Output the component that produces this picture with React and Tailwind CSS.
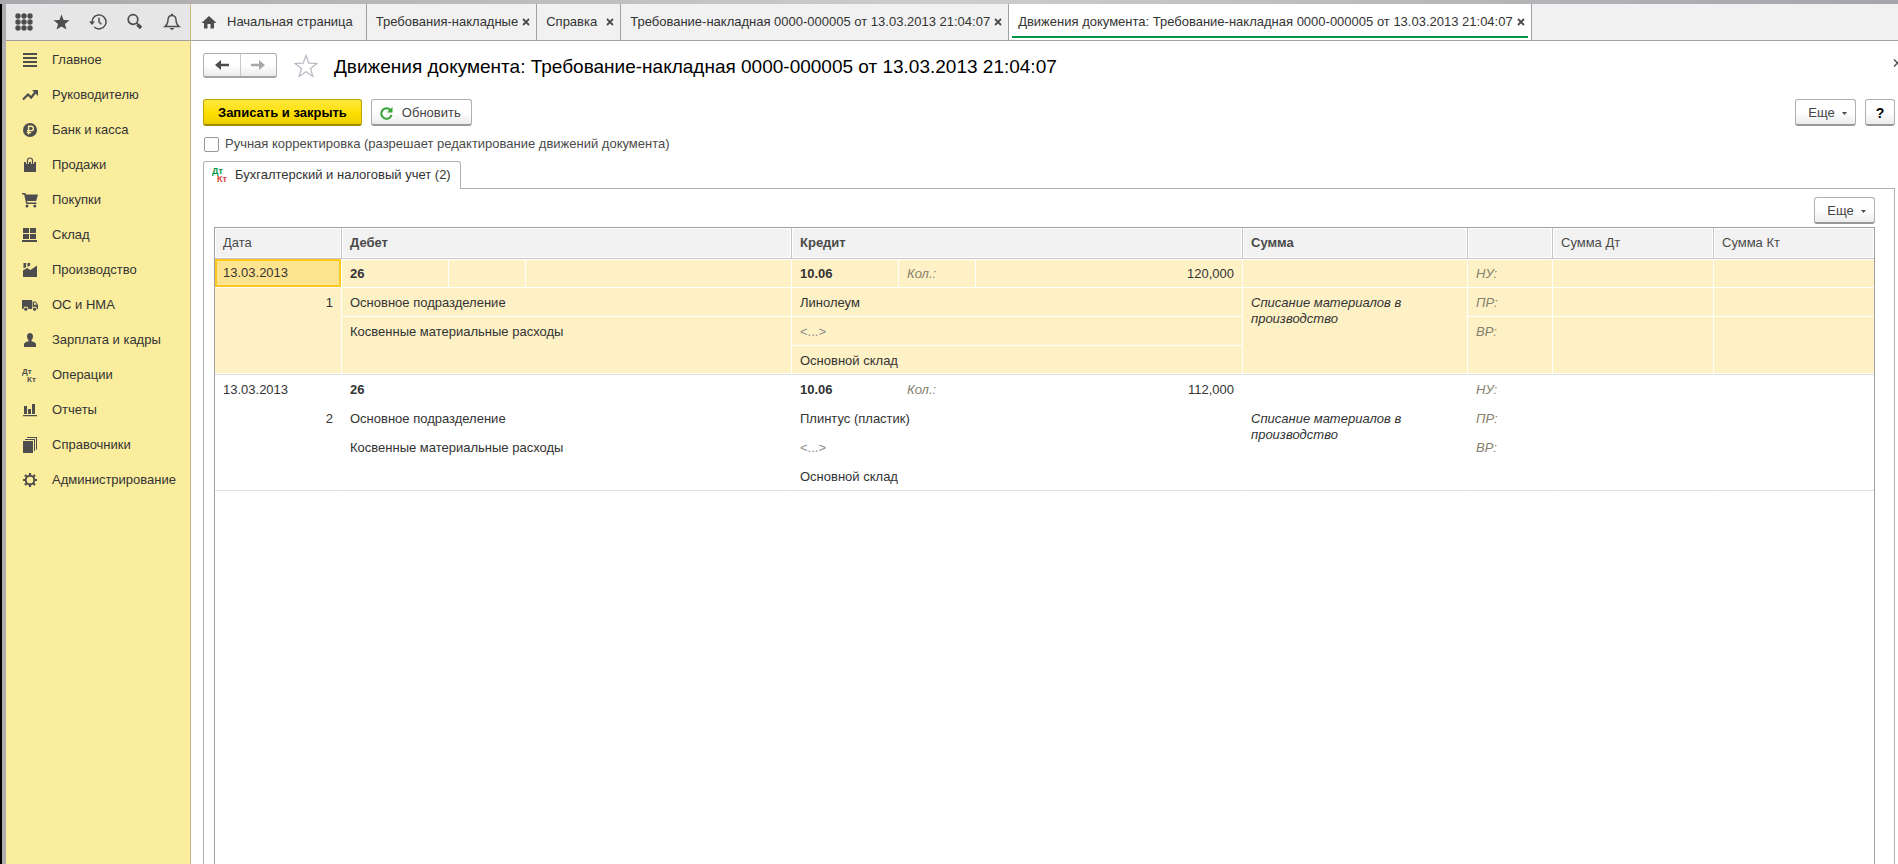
import React from "react";

const FONT = "font-['Liberation_Sans',Arial,sans-serif]";

function Svg({ size = 16, children, className = "" }) {
  return (
    <svg width={size} height={size} viewBox={`0 0 ${size} ${size}`} fill="#4d4d4d" className={`shrink-0 ${className}`} aria-hidden="true">
      {children}
    </svg>
  );
}

function PostingsGlyph({ top, bottom, size = 8 }) {
  return (
    <>
      <text x="0" y="7" fontSize={size} fontWeight="bold" fill={top} fontFamily="Liberation Sans, Arial, sans-serif">Дт</text>
      <text x="5" y="15" fontSize={size} fontWeight="bold" fill={bottom} fontFamily="Liberation Sans, Arial, sans-serif">Кт</text>
    </>
  );
}

const ICONS = {
  main: <path d="M1 1h14v2H1zM1 5h14v2H1zM1 9h14v2H1zM1 13h14v2H1z" />,
  trend: (
    <>
      <path d="M1 12.5 6 7.5l3.2 3L13.5 5" fill="none" stroke="#4d4d4d" strokeWidth="2.2" />
      <path d="M10 3h6v6z" />
    </>
  ),
  bank: (
    <>
      <circle cx="8" cy="8" r="7" />
      <path d="M6.600 12.500V4.200h2.600a2.100 2.100 0 0 1 0 4.400H4.800M4.800 10.600h4.400" fill="none" stroke="#fbed9e" strokeWidth="1.400" />
    </>
  ),
  bag: (
    <>
      <path d="M2 5h12v10H2z" />
      <path d="M5.500 7V3.500a2.500 2.500 0 0 1 5 0V7" fill="none" stroke="#fbed9e" strokeWidth="3" />
      <path d="M5.500 7.500V3.500a2.500 2.500 0 0 1 5 0v4" fill="none" stroke="#4d4d4d" strokeWidth="1.200" />
    </>
  ),
  cart: (
    <>
      <path d="M0 1h3.400l.5 1.500H16L14.200 9H5l.4 1.600h9v1.400H4.200L2.200 2.400H0z" />
      <circle cx="5" cy="14" r="1.500" />
      <circle cx="12.800" cy="14" r="1.500" />
    </>
  ),
  store: <path d="M1 1h6v5H1zM8 1h6v5H8zM1 7h6v5H1zM8 7h6v5H8zM0 13h15v2H0z" />,
  factory: <path d="M1 15V8.500L5 6 8.500 8 15 3.500V15zM1.500 1h2.600v4L1.500 6.500zM5.500 1h2.600v2.500L5.500 5z" />,
  truck: (
    <>
      <path d="M0 3h10v9H0zM10.600 4.500h3.200L16 8v4h-5.400z" />
      <path d="M12 5.600h1.300l1.400 2.200H12z" fill="#fbed9e" />
      <circle cx="3.800" cy="12" r="2.400" fill="#fbed9e" />
      <circle cx="12.600" cy="12" r="2.400" fill="#fbed9e" />
      <circle cx="3.800" cy="12.200" r="1.600" />
      <circle cx="12.600" cy="12.200" r="1.600" />
    </>
  ),
  person: <path d="M8 1c1.900 0 3 1.400 3 3.300C11 6 10.300 7.300 9.500 8v1.200c2.600.500 4.500 1.500 4.500 3.300V15H2v-2.500c0-1.800 1.900-2.800 4.500-3.300V8C5.700 7.300 5 6 5 4.300 5 2.400 6.100 1 8 1z" />,
  ops: <PostingsGlyph top="#4d4d4d" bottom="#4d4d4d" />,
  chart: <path d="M2 4h3v8H2zM6 7h3v5H6zM10 2h3v10h-3zM1 13h14v1.300H1z" />,
  books: <path d="M1 4h10v12H1zM3 2h10v12h-1V3H3zM5 0h10v12.500h-1V1H5z" />,
  gear: (
    <>
      <circle cx="8" cy="8" r="4.300" fill="none" stroke="#4d4d4d" strokeWidth="1.900" />
      <path
        d="M8 1v2.500M8 12.500V15M1 8h2.500M12.500 8H15M3 3l1.800 1.800M11.200 11.200 13 13M13 3l-1.800 1.800M4.800 11.200 3 13"
        stroke="#4d4d4d"
        strokeWidth="2.200"
      />
    </>
  ),
};

const SECTIONS = [
  ["main", "Главное"],
  ["trend", "Руководителю"],
  ["bank", "Банк и касса"],
  ["bag", "Продажи"],
  ["cart", "Покупки"],
  ["store", "Склад"],
  ["factory", "Производство"],
  ["truck", "ОС и НМА"],
  ["person", "Зарплата и кадры"],
  ["ops", "Операции"],
  ["chart", "Отчеты"],
  ["books", "Справочники"],
  ["gear", "Администрирование"],
];

const TOOLS = [
  [
    "Все функции",
    <g key="g">
      {[3, 9, 15].map((y) => [3, 9, 15].map((x) => <circle key={`${x}-${y}`} cx={x} cy={y} r="2.700" />))}
    </g>,
  ],
  ["Избранное", <path key="s" d="m9.500 1.500 2.100 5.400 5.900.3-4.600 3.700 1.600 5.700-5-3.200-5 3.200 1.600-5.700-4.600-3.700 5.900-.3z" />],
  [
    "История",
    <g key="h" fill="none" stroke="#4d4d4d" strokeWidth="1.500">
      <path d="M3 9a7 7 0 1 1 2.200 5" />
      <path d="M10 4.800V9l2.400 2.200" />
      <path d="M0 8.500h6L3 12z" fill="#4d4d4d" stroke="none" />
    </g>,
  ],
  [
    "Поиск",
    <g key="f" fill="none" stroke="#4d4d4d">
      <circle cx="7" cy="6.500" r="4.800" strokeWidth="1.700" />
      <path d="m10.500 10 1.500 1.500" strokeWidth="1.500" />
      <path d="m11.500 11.500 3.500 3.500" strokeWidth="3.600" />
    </g>,
  ],
  [
    "Уведомления",
    <g key="b">
      <path d="M9 2.500C6.300 2.500 5 4.500 5 7c0 3.500-1 5-3 6.500h14C14 12 13 10.500 13 7c0-2.500-1.300-4.500-4-4.500z" fill="none" stroke="#4d4d4d" strokeWidth="1.400" />
      <path d="M8 .8h2V3H8zM6.500 15h5L9 17.200z" />
    </g>,
  ],
];

const TABS = [
  "Требования-накладные",
  "Справка",
  "Требование-накладная 0000-000005 от 13.03.2013 21:04:07",
  "Движения документа: Требование-накладная 0000-000005 от 13.03.2013 21:04:07",
];

const ENTRIES = [
  { id: 1, date: "13.03.2013", debit: "26", credit: "10.06", qty: "120,000", item: "Линолеум", selected: true },
  { id: 2, date: "13.03.2013", debit: "26", credit: "10.06", qty: "112,000", item: "Плинтус (пластик)", selected: false },
];

function Cross() {
  return (
    <svg width="8" height="8" viewBox="0 0 8 8" fill="none" stroke="#4d4d4d" strokeWidth="1.800" aria-hidden="true">
      <path d="m1 1 6 6M7 1 1 7" />
    </svg>
  );
}

function Tab({ title, active }) {
  return (
    <div className={`relative flex min-w-[84px] items-center justify-between gap-1 whitespace-nowrap border-r border-[#a0a0a0] pl-[9px] pr-[6px] ${active ? "bg-white" : ""}`}>
      <a href="#tab">{title}</a>
      <button type="button" aria-label="Закрыть"><Cross /></button>
      {active && <span className="absolute inset-x-[3px] bottom-[2px] h-[2px] bg-[#009646]" />}
    </div>
  );
}

const BUTTON =
  "flex h-[27px] items-center justify-center rounded-[3px] border border-[#b0b0b0] border-b-2 border-b-[#999999] bg-linear-to-b from-white from-50% to-[#ececec] pt-[2px] text-[#444444]";

function MoreButton() {
  return (
    <button type="button" className={`${BUTTON} w-[61px] gap-[7px] pl-1`}>
      Еще
      <svg width="5" height="3" viewBox="0 0 5 3" fill="#4d4d4d" aria-hidden="true"><path d="M0 0h5L2.500 3z" /></svg>
    </button>
  );
}

function Entry({ e }) {
  const bg = e.selected ? "bg-[#fef1c6]" : "bg-white";
  const base = `border-b border-r border-white px-2 pb-0 align-top ${bg}`;
  const cell = `${base} pt-[2px] leading-[26px]`;
  const first = `${base} h-[29px] border-t pt-0 leading-[27px]`;
  const last = `${cell} border-b-[#e0e0e0] shadow-[inset_0_-1px_0_white]`;
  const muted = "italic text-[#85806b]";
  return (
    <tbody>
      <tr>
        {e.selected ? (
          <td className="h-[29px] border-b border-r border-white bg-[#ffe48f] px-2 py-0 align-top leading-[28px] shadow-[inset_0_0_0_2px_#fcc81e]">{e.date}</td>
        ) : (
          <td className={first}>{e.date}</td>
        )}
        <td className={`${first} font-bold`}>{e.debit}</td>
        <td className={first} />
        <td className={first} />
        <td className={`${first} font-bold`}>{e.credit}</td>
        <td className={`${first} ${muted}`}>Кол.:</td>
        <td className={`${first} text-right`}>{e.qty}</td>
        <td className={first} />
        <td className={`${first} ${muted}`}>НУ:</td>
        <td className={first} />
        <td className={`${first} border-r-0`} />
      </tr>
      <tr>
        <td rowSpan={3} className={`${last} text-right`}>{e.id}</td>
        <td colSpan={3} className={`${cell} h-[29px]`}>Основное подразделение</td>
        <td colSpan={3} className={`${cell} h-[29px]`}>{e.item}</td>
        <td rowSpan={3} className={`${last} italic`}>
          <div className="pr-12 pt-[5px] leading-4">Списание материалов в производство</div>
        </td>
        <td className={`${cell} ${muted}`}>ПР:</td>
        <td className={cell} />
        <td className={`${cell} border-r-0`} />
      </tr>
      <tr>
        <td colSpan={3} rowSpan={2} className={last}>Косвенные материальные расходы</td>
        <td colSpan={3} className={`${cell} h-[29px] text-[#8c8c8c]`}>&lt;...&gt;</td>
        <td rowSpan={2} className={`${last} ${muted}`}>ВР:</td>
        <td rowSpan={2} className={last} />
        <td rowSpan={2} className={`${last} border-r-0`} />
      </tr>
      <tr>
        <td colSpan={3} className={`${last} h-[29px]`}>Основной склад</td>
      </tr>
    </tbody>
  );
}

function Postings() {
  const th =
    "h-[31px] border-b border-r border-b-[#c4c4c4] border-r-[#c4c4c4] bg-[#f2f2f2] px-2 py-0 text-left align-middle text-[#4a4a4a] shadow-[inset_0_0_0_1px_white]";
  return (
    <table className="w-full table-fixed border-separate border-spacing-0">
      <colgroup>
        <col className="w-[127px]" />
        <col className="w-[107px]" />
        <col className="w-[77px]" />
        <col className="w-[266px]" />
        <col className="w-[107px]" />
        <col className="w-[77px]" />
        <col className="w-[267px]" />
        <col className="w-[225px]" />
        <col className="w-[85px]" />
        <col className="w-[161px]" />
        <col className="w-[160px]" />
      </colgroup>
      <thead>
        <tr>
          <th className={`${th} font-normal`}>Дата</th>
          <th colSpan={3} className={th}>Дебет</th>
          <th colSpan={3} className={th}>Кредит</th>
          <th className={th}>Сумма</th>
          <th className={th} />
          <th className={`${th} font-normal`}>Сумма Дт</th>
          <th className={`${th} border-r-0 font-normal`}>Сумма Кт</th>
        </tr>
      </thead>
      {ENTRIES.map((e) => <Entry key={e.id} e={e} />)}
    </table>
  );
}

export default function App() {
  return (
    <div className={`flex min-h-screen flex-col bg-white text-[13px] leading-4 text-[#333333] ${FONT}`}>
      <div className="h-1 bg-linear-to-r from-[#a9a9ad] via-[#cdcdcd] to-[#a4a5aa]" />
      <div className="flex flex-1">
        <div className="w-[2px] shrink-0 bg-black" />
        <div className="w-1 shrink-0 bg-[#b0adb0]" />
        <aside className="flex w-[185px] shrink-0 flex-col border-r border-[#c9b879] bg-[#fbed9e]">
          <div className="flex h-[37px] border-b border-[#a0a0a0] bg-[#e6e6e6]">
            {TOOLS.map(([label, icon]) => (
              <button key={label} type="button" aria-label={label} className="flex flex-1 items-center justify-center">
                <Svg size={18}>{icon}</Svg>
              </button>
            ))}
          </div>
          <nav className="flex flex-col pt-[1px]">
            {SECTIONS.map(([icon, label]) => (
              <a key={label} href="#section" className="flex h-[35px] items-center gap-[14px] whitespace-nowrap pl-4">
                <Svg>{ICONS[icon]}</Svg>
                {label}
              </a>
            ))}
          </nav>
        </aside>

        <div className="flex min-w-0 flex-1 flex-col">
          <div className="flex h-[37px] shrink-0 border-b border-[#a0a0a0] bg-[#f1f1f1]">
            <a href="#home" className="flex items-center gap-[10px] whitespace-nowrap border-r border-[#a0a0a0] pl-[10px] pr-[13px]">
              <Svg><path d="M8 2 15.500 9H13v5.500H9.500V10h-3v4.500H3V9H.5z" /></Svg>
              Начальная страница
            </a>
            {TABS.map((t, i) => <Tab key={t} title={t} active={i === 3} />)}
          </div>

          <main className="flex flex-1 flex-col pl-3 pr-[3px]">
            <header className="flex items-start pt-3">
              <div className="flex h-[25px] w-[74px] rounded-[3px] border border-[#b0b0b0] border-b-2 border-b-[#a5a5a5] bg-linear-to-b from-white from-50% to-[#ececec]">
                <button type="button" aria-label="Назад" className="flex flex-1 items-center justify-center border-r border-[#c8c8c8]">
                  <Svg size={14}><path d="M0 7l6-5v3.700h8v2.600H6V12z" /></Svg>
                </button>
                <button type="button" aria-label="Вперед" className="flex flex-1 items-center justify-center">
                  <Svg size={14}><path d="M14 7 8 2v3.700H0v2.600h8V12z" fill="#a8a8a8" /></Svg>
                </button>
              </div>
              <button type="button" aria-label="В избранное" className="ml-[17px] mt-[1px]">
                <svg width="24" height="24" viewBox="0 0 24 24" fill="none" stroke="#b4b8c0" strokeWidth="1.200" aria-hidden="true">
                  <path d="m12 1.500 2.800 7.700 8.200.3-6.500 5 2.300 7.900L12 17.800l-6.800 4.600 2.300-7.900L1 9.500l8.200-.3z" />
                </svg>
              </button>
              <h1 className="ml-4 flex-1 whitespace-nowrap text-[19px] leading-[28px] text-black">
                Движения документа: Требование-накладная 0000-000005 от 13.03.2013 21:04:07
              </h1>
              <button type="button" aria-label="Закрыть форму" className="-mr-[7px] mt-[6px]">
                <svg width="9" height="8" viewBox="0 0 9 8" fill="none" stroke="#4d4d4d" strokeWidth="1.400" aria-hidden="true"><path d="m1 .5 7 7M8 .5l-7 7" /></svg>
              </button>
            </header>

            <div className="mt-[18px] flex">
              <button
                type="button"
                className="h-[27px] rounded-[3px] border border-b-2 border-[#bba500] border-b-[#a08c00] bg-linear-to-b from-[#ffe93a] via-[#ffe000] to-[#edcf00] px-[14px] pt-[2px] font-bold text-black"
              >
                Записать и закрыть
              </button>
              <button type="button" className={`${BUTTON} ml-[9px] gap-[9px] pl-2 pr-[10px]`}>
                <svg width="13" height="13" viewBox="0 0 13 13" aria-hidden="true">
                  <path d="M10.600 3.300A5.200 5.200 0 1 0 11.500 8" fill="none" stroke="#36a336" strokeWidth="2" />
                  <path d="M12.500 0v5.500H7z" fill="#36a336" />
                </svg>
                Обновить
              </button>
              <div className="ml-auto flex gap-[9px]">
                <MoreButton />
                <button type="button" className={`${BUTTON} w-[30px] text-[14px] font-bold text-black`}>?</button>
              </div>
            </div>

            <label className="mt-2 flex h-5 items-center gap-[6px] pl-[1px] text-[#4a4a4a]">
              <input type="checkbox" className="size-[15px] appearance-none rounded-[2px] border border-[#999999] bg-white" />
              Ручная корректировка (разрешает редактирование движений документа)
            </label>

            <div className="mt-[7px] flex">
              <button type="button" className="z-10 -mb-[1px] flex h-[28px] items-center gap-[7px] whitespace-nowrap rounded-t-[3px] border border-b-0 border-[#b0b0b0] bg-white pb-[2px] pl-2 pr-[9px]">
                <Svg><PostingsGlyph top="#009646" bottom="#e04040" size={9} /></Svg>
                Бухгалтерский и налоговый учет (2)
              </button>
            </div>
            <section className="flex flex-1 flex-col border border-b-0 border-[#b0b0b0] pl-[10px] pr-[19px] pt-2">
              <div className="flex justify-end">
                <MoreButton />
              </div>
              <div className="mt-[3px] flex-1 border border-b-0 border-[#a0a0a0]">
                <Postings />
              </div>
            </section>
          </main>
        </div>
      </div>
    </div>
  );
}
